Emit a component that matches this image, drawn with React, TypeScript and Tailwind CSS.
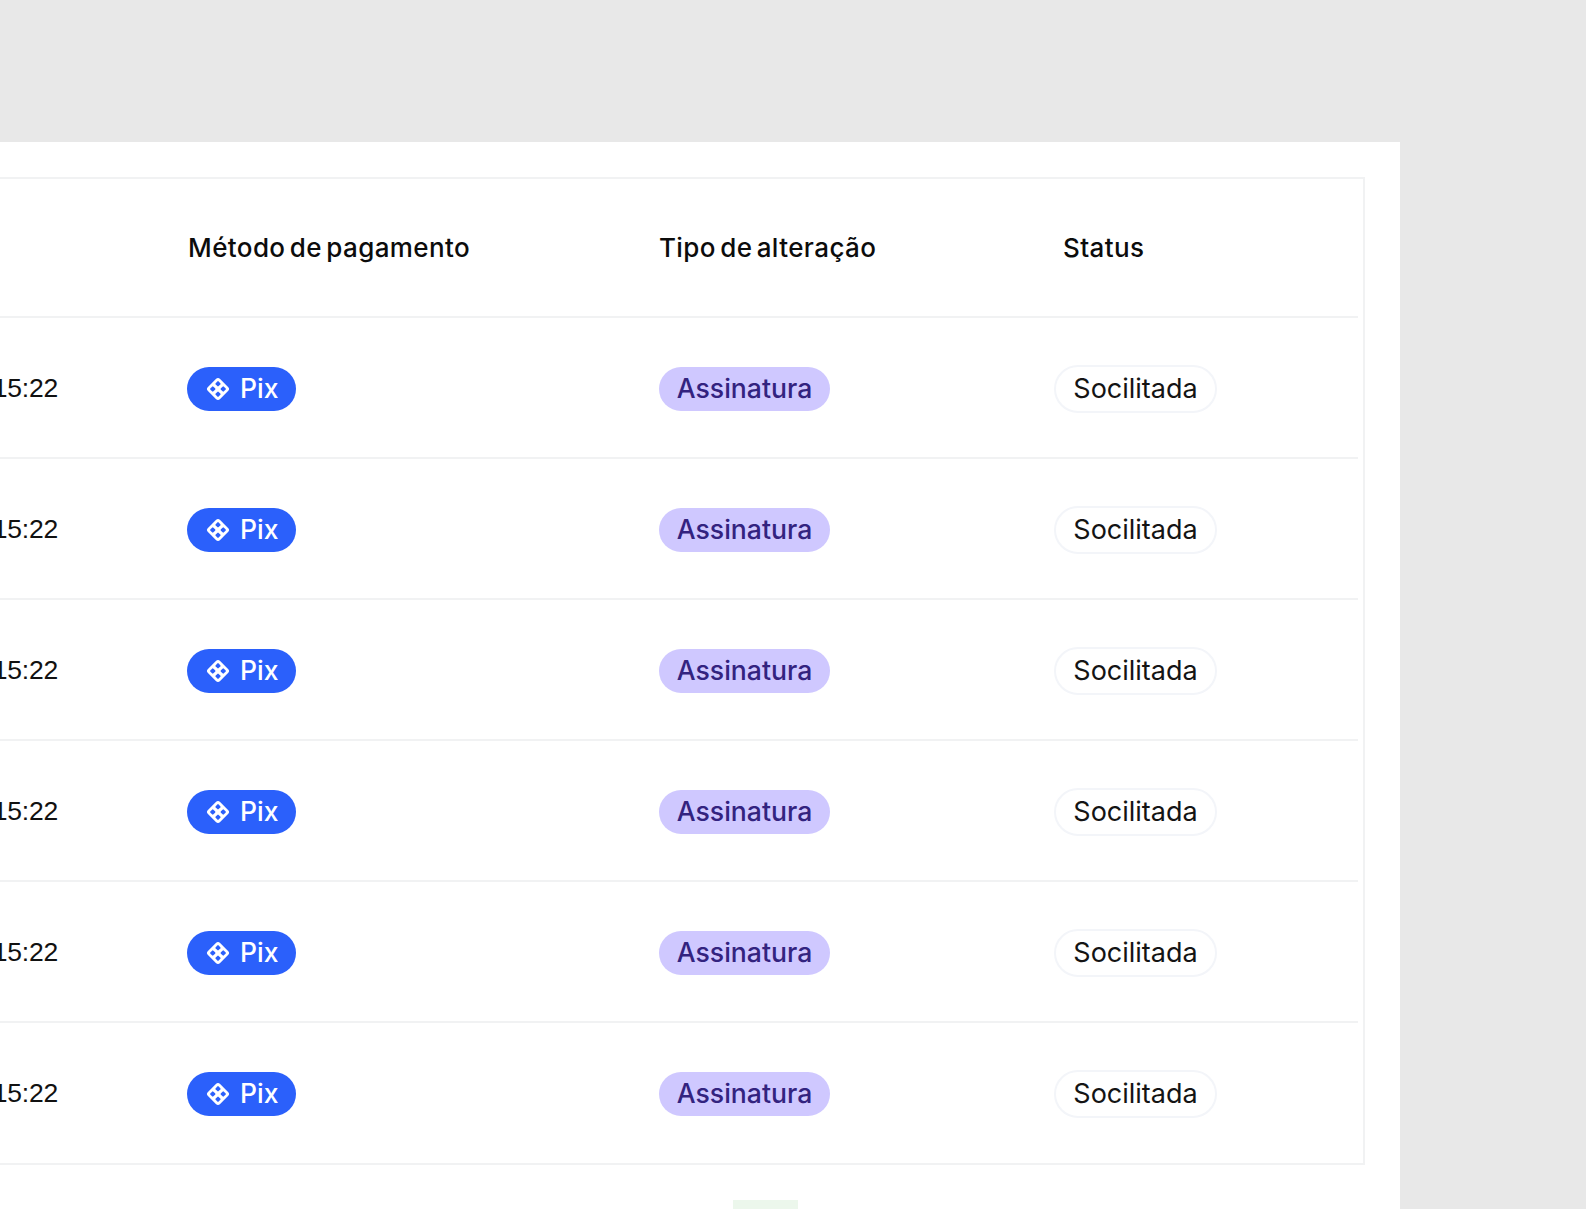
const rows = [0, 1, 2, 3, 4, 5];

function PixIcon() {
  return (
    <svg width="24" height="24" viewBox="0 0 24 24" className="shrink-0">
      <g transform="rotate(45 12 12)">
        <rect x="3.4" y="3.4" width="17.2" height="17.2" rx="3" fill="#fff" />
        <rect x="6.2" y="6.2" width="4.2" height="4.2" rx="0.9" fill="#2b60fb" />
        <rect x="13.6" y="6.2" width="4.2" height="4.2" rx="0.9" fill="#2b60fb" />
        <rect x="6.2" y="13.6" width="4.2" height="4.2" rx="0.9" fill="#2b60fb" />
        <rect x="13.6" y="13.6" width="4.2" height="4.2" rx="0.9" fill="#2b60fb" />
      </g>
    </svg>
  );
}

export default function App() {
  return (
    <div className="w-[1586px] h-[1210px] overflow-hidden bg-white font-['Inter',sans-serif]">
      <div className="h-[1209px] bg-[#e8e8e8] pt-[142px]">
        <div className="w-[1400px] h-[1067px] bg-white pt-[35px] pr-[35px]">
          <div className="h-[988px] border-2 border-l-0 border-[#f1f2f3] pr-[5px] flex flex-col">
            <div className="h-[139px] shrink-0 flex items-center text-[26px] font-medium text-[#0c0c0c] border-b-2 border-[#f1f2f3] leading-none tracking-[0.4px] [word-spacing:-3px]">
              <div className="w-[188px] shrink-0" />
              <div className="w-[471px] shrink-0">Método de pagamento</div>
              <div className="w-[404px] shrink-0">Tipo de alteração</div>
              <div>Status</div>
            </div>
            {rows.map((r) => (
              <div key={r} className="h-[141px] shrink-0 pt-[2px] flex items-center border-b-2 border-[#f1f2f3] last:border-b-transparent text-[27px] leading-none">
                <div className="w-[187px] shrink-0 overflow-hidden flex justify-end pr-[129px]">
                  <span className="font-['Liberation_Sans',sans-serif] text-[26.5px] text-[#111] tracking-[-0.2px] whitespace-nowrap">15:22</span>
                </div>
                <div className="w-[472px] shrink-0">
                  <span className="inline-flex items-center h-[44px] w-[109px] rounded-[22px] bg-[#2b60fb] text-white pl-[19px] gap-[10px] text-[26.5px] font-medium">
                    <PixIcon />
                    <span>Pix</span>
                  </span>
                </div>
                <div className="w-[395px] shrink-0">
                  <span className="inline-flex items-center justify-center h-[44px] w-[171px] rounded-[22px] bg-[#cfc8ff] text-[#33237f] text-[26.6px] font-medium">Assinatura</span>
                </div>
                <span className="inline-flex items-center justify-center h-[48px] w-[163px] rounded-[24px] border-2 border-[#f3f5f9] text-[#141414]">Socilitada</span>
              </div>
            ))}
          </div>
          <div className="mt-[35px] ml-[733px] w-[65px] h-[9px] bg-[#ecf7ec]" />
        </div>
      </div>
    </div>
  );
}
